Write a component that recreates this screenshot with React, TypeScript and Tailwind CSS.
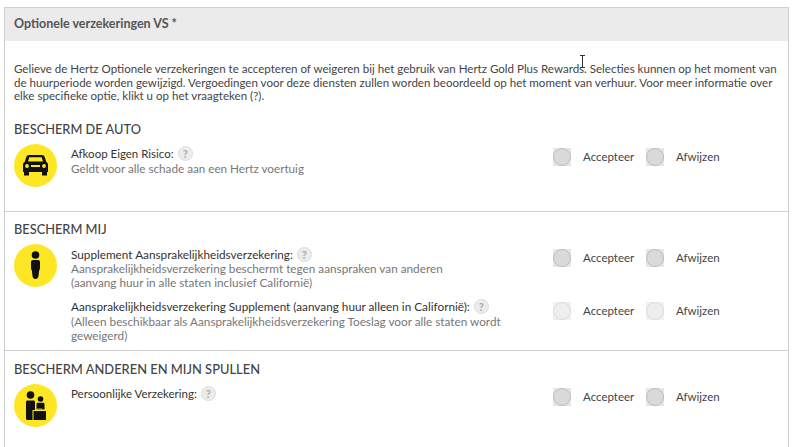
function Radio({ label, faded }: { label: string; faded?: boolean }) {
  return (
    <label className="flex items-center">
      <span className={`flex h-[18px] w-[18px] items-center justify-center ${faded ? "bg-[#f0f0f0]" : "bg-[#e6e6e6]"}`}>
        <span className={`block h-[18px] w-[18px] rounded-full border ${faded ? "border-[#dcdcdc] bg-[#eeeeee]" : "border-[#bdbdbd] bg-[#dadada]"}`} />
      </span>
      <span className="ml-[12px] text-[#444]">{label}</span>
    </label>
  )
}

function Choice({ faded }: { faded?: boolean }) {
  return (
    <div className="flex w-[224px] shrink-0 items-center text-[11.5px] leading-[18px]">
      <div className="w-[93px]">
        <Radio label="Accepteer" faded={faded} />
      </div>
      <Radio label="Afwijzen" faded={faded} />
    </div>
  )
}

function Help() {
  return (
    <span className="ml-[4px] inline-flex h-[15px] w-[15px] items-center justify-center rounded-full border border-[#dddddd] bg-[#ececec] text-[11px] font-bold leading-none text-[#a8a8a8]">
      ?
    </span>
  )
}

function Badge({ children }: { children: React.ReactNode }) {
  return (
    <div className="flex h-[43px] w-[43px] shrink-0 items-center justify-center rounded-full bg-[#fde725]">
      {children}
    </div>
  )
}

function CarIcon() {
  return (
    <svg width="25" height="22" viewBox="0 0 25 22" fill="#111">
      <path d="M6 1h13c1.500 0 2.300.8 2.800 2.200L23.300 8c1 .5 1.700 1.500 1.700 2.800V18H0v-7.200C0 9.500.7 8.500 1.700 8l1.500-4.800C3.700 1.800 4.500 1 6 1zm.3 2.200L5 7.500h15l-1.300-4.300H6.300z" fillRule="evenodd" />
      <path d="M1 18h5v3.500H1zM19 18h5v3.500h-5z" />
      <circle cx="4" cy="12" r="1.900" fill="#fde725" />
      <circle cx="21" cy="12" r="1.900" fill="#fde725" />
      <rect x="8" y="11" width="9" height="2" fill="#fde725" />
    </svg>
  )
}

function PersonIcon() {
  return (
    <svg width="9" height="28" viewBox="0 0 9 28" fill="#111">
      <circle cx="4.500" cy="4" r="3.800" />
      <path d="M2 9h5c1.200 0 2 .8 2 2v6c0 1-.3 1.700-.8 2.200L7.500 25c-.2 2-1.300 3-3 3s-2.800-1-3-3L.8 19.200C.3 18.700 0 18 0 17v-6c0-1.200.8-2 2-2z" />
    </svg>
  )
}

function FamilyIcon() {
  return (
    <svg width="20" height="29" viewBox="0 0 20 29" fill="#111">
      <circle cx="4.500" cy="4" r="3.800" />
      <circle cx="14.500" cy="8" r="2.800" />
      <path d="M1.500 9.500h6c1 0 1.500.7 1.500 1.700V19H6.500v10h-5C.7 29 0 28.300 0 27.500V11c0-.9.6-1.500 1.500-1.500z" />
      <path d="M12 11.800h5c1 0 1.500.7 1.500 1.500V18.500H10.500v-5.500c0-.7.700-1.200 1.500-1.200z" />
      <path d="M7.500 20H20v9H7.500z" />
      <path d="M11 19.500v-1.500h5v1.500" fill="none" stroke="#fde725" strokeWidth=".7" />
    </svg>
  )
}

export default function App() {
  return (
    <div className="relative h-[447px] w-[800px] overflow-hidden bg-white pl-[4px] pr-[11px] pt-[7px] font-['Lato',sans-serif] text-[#444]">
      <div className="h-[440px] border-x border-t border-[#cfcfcf]">
        {/* Header */}
        <div className="flex h-[33px] items-center bg-[#ebebeb] pl-[9px] text-[12.5px] font-bold text-[#555]">
          Optionele verzekeringen VS *
        </div>

        {/* Intro */}
        <p className="px-[9px] pt-[21px] text-[11.56px] leading-[13.500px] text-[#444]">
          Gelieve de Hertz Optionele verzekeringen te accepteren of weigeren bij het gebruik van Hertz Gold Plus Rewards. Selecties kunnen op het moment van de huurperiode worden gewijzigd. Vergoedingen voor deze diensten zullen worden beoordeeld op het moment van verhuur. Voor meer informatie over elke specifieke optie, klikt u op het vraagteken (?).
        </p>

        {/* Bescherm de auto */}
        <section className="h-[109px] border-b border-[#cfcfcf] px-[9px] pt-[18px]">
          <h2 className="text-[12.8px] font-medium leading-[16px] text-[#444]">BESCHERM DE AUTO</h2>
          <div className="mt-[7px] flex">
            <Badge><CarIcon /></Badge>
            <div className="ml-[14px] flex-1 pt-[2px] text-[11.5px] leading-[15px]">
              <div className="flex items-center text-[#333]">Afkoop Eigen Risico:<Help /></div>
              <div className="text-[11.7px] text-[#777]">Geldt voor alle schade aan een Hertz voertuig</div>
            </div>
            <div className="pr-[2px] pt-[4px]"><Choice /></div>
          </div>
        </section>

        {/* Bescherm mij */}
        <section className="h-[139px] border-b border-[#cfcfcf] px-[9px] pt-[9px]">
          <h2 className="text-[12.8px] font-medium leading-[16px] text-[#444]">BESCHERM MIJ</h2>
          <div className="mt-[7px] flex">
            <Badge><PersonIcon /></Badge>
            <div className="ml-[14px] flex-1 pt-[4px] text-[11.75px] leading-[14px]">
              <div className="flex h-[14px] justify-between">
                <div className="flex items-center text-[#333]">Supplement Aansprakelijkheidsverzekering:<Help /></div>
                <div className="mt-[1px] pr-[2px] text-[11.5px]"><Choice /></div>
              </div>
              <div className="text-[#777]">
                Aansprakelijkheidsverzekering beschermt tegen aanspraken van anderen
                <br />
                (aanvang huur in alle staten inclusief Californië)
              </div>
              <div className="mt-[10px] flex h-[14px] justify-between">
                <div className="flex items-center text-[#333]">Aansprakelijkheidsverzekering Supplement (aanvang huur alleen in Californië):<Help /></div>
                <div className="mt-[2px] pr-[2px]"><Choice faded /></div>
              </div>
              <div className="mt-[1px] w-[450px] text-[#777]">
                (Alleen beschikbaar als Aansprakelijkheidsverzekering Toeslag voor alle staten wordt geweigerd)
              </div>
            </div>
          </div>
        </section>

        {/* Bescherm anderen */}
        <section className="px-[9px] pt-[10px]">
          <h2 className="text-[12.9px] font-medium leading-[16px] text-[#444]">BESCHERM ANDEREN EN MIJN SPULLEN</h2>
          <div className="mt-[7px] flex">
            <Badge><FamilyIcon /></Badge>
            <div className="ml-[14px] flex-1 pt-[2px] text-[11.5px] leading-[15px]">
              <div className="flex items-center text-[#333]">Persoonlijke Verzekering:<Help /></div>
            </div>
            <div className="pr-[2px] pt-[4px]"><Choice /></div>
          </div>
        </section>
      </div>

      {/* Text cursor */}
      <svg className="absolute left-[578px] top-[55px]" width="9" height="13" viewBox="0 0 9 13" fill="none" stroke="#333" strokeWidth="1">
        <path d="M2 .5h5M4.500 .5v12M2 12.500h5" />
      </svg>
    </div>
  )
}
